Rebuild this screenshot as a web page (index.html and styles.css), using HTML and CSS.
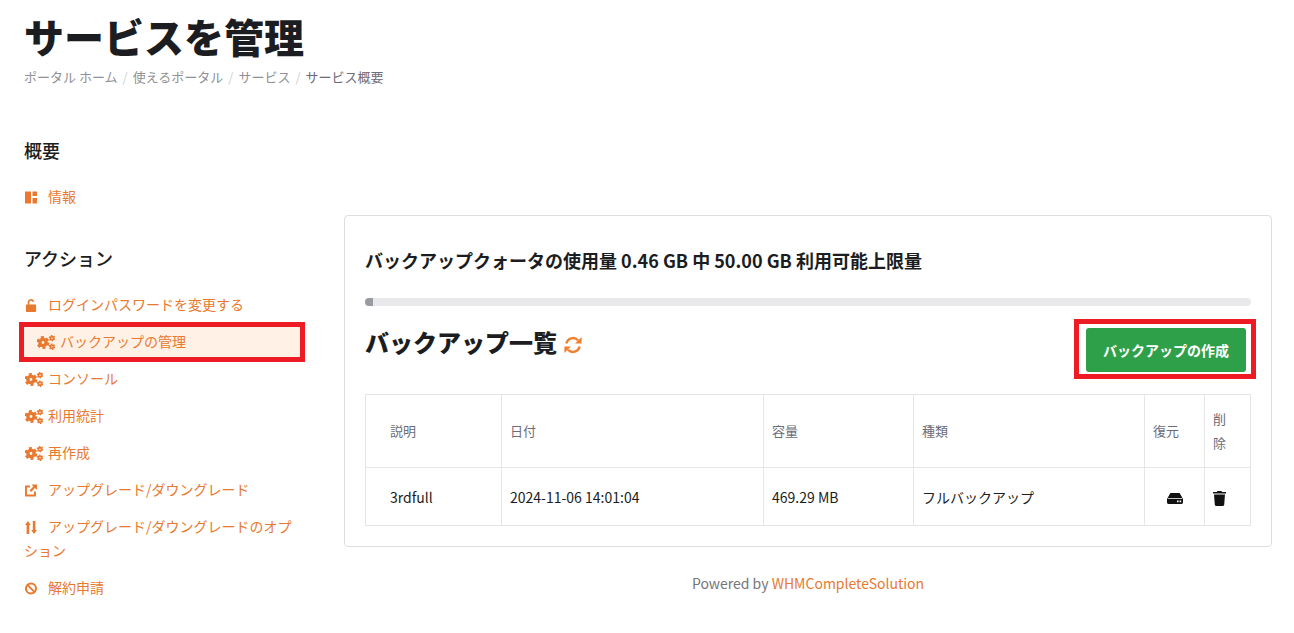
FILE: index.html
```html
<!DOCTYPE html>
<html lang="ja">
<head>
  <meta charset="UTF-8">
  <title>サービスを管理</title>
  <link rel="stylesheet" href="styles.css">
</head>
<body>
  <svg class="defs" width="0" height="0">
    <symbol id="i-cogs" viewBox="0 0 18 15">
      <circle cx="6" cy="7.5" r="3.1" fill="none" stroke="currentColor" stroke-width="3.4"/>
      <circle cx="6" cy="7.5" r="5.2" fill="none" stroke="currentColor" stroke-width="2.4" stroke-dasharray="3 2.44"/>
      <circle cx="15" cy="3.2" r="1.6" fill="none" stroke="currentColor" stroke-width="1.7"/>
      <circle cx="15" cy="3.2" r="2.7" fill="none" stroke="currentColor" stroke-width="1.2" stroke-dasharray="1.5 1.33"/>
      <circle cx="15" cy="11.8" r="1.6" fill="none" stroke="currentColor" stroke-width="1.7"/>
      <circle cx="15" cy="11.8" r="2.7" fill="none" stroke="currentColor" stroke-width="1.2" stroke-dasharray="1.5 1.33"/>
    </symbol>
  </svg>

  <header class="page-head">
    <h1>サービスを管理</h1>
    <nav class="crumbs">
      <a>ポータル ホーム</a><i>/</i><a>使えるポータル</a><i>/</i><a>サービス</a><i>/</i><span>サービス概要</span>
    </nav>
  </header>

  <div class="layout">
    <aside class="sidebar">
      <h3>概要</h3>
      <ul class="menu">
        <li>
          <svg class="ico w12" viewBox="0 0 12 12"><path fill="currentColor" d="M0 0h6v12H0zM7.5 0H12v4.5H7.5zM7.5 6.5H12V12H7.5z"/></svg>情報
        </li>
      </ul>

      <h3 class="second">アクション</h3>
      <ul class="menu second">
        <li>
          <svg class="ico w12" viewBox="0 0 12 14"><path fill="currentColor" d="M1.5 6h9a1 1 0 0 1 1 1v6a1 1 0 0 1-1 1h-9a1 1 0 0 1-1-1V7a1 1 0 0 1 1-1z"/><path fill="none" stroke="currentColor" stroke-width="1.8" d="M3.3 6.5V3.6a2.7 2.7 0 0 1 5.3-.6"/></svg>ログインパスワードを変更する
        </li>
        <li class="active">
          <svg class="ico cog"><use href="#i-cogs"/></svg>バックアップの管理
        </li>
        <li><svg class="ico cog"><use href="#i-cogs"/></svg>コンソール</li>
        <li><svg class="ico cog"><use href="#i-cogs"/></svg>利用統計</li>
        <li><svg class="ico cog"><use href="#i-cogs"/></svg>再作成</li>
        <li>
          <svg class="ico w12" viewBox="0 0 12 12"><path fill="none" stroke="currentColor" stroke-width="1.9" d="M5 2H1v9h9V7"/><path fill="currentColor" d="M6.5 0H12v5.5L10 3.6 6.2 7.4 4.6 5.8 8.4 2z"/></svg>アップグレード/ダウングレード
        </li>
        <li>
          <svg class="ico w12" viewBox="0 0 12 13"><path fill="currentColor" d="M2.9 0l2.9 4H4.2v9H1.6V4H0zM9.1 13L6.2 9h1.6V0h2.6v9H12z"/></svg>アップグレード/ダウングレードのオプション
        </li>
        <li>
          <svg class="ico w12" viewBox="0 0 12 12"><circle cx="6" cy="6" r="5" fill="none" stroke="currentColor" stroke-width="2"/><path stroke="currentColor" stroke-width="2" d="M2.6 2.6l6.8 6.8"/></svg>解約申請
        </li>
      </ul>
    </aside>

    <main class="content">
      <section class="card">
        <p class="quota">バックアップクォータの使用量 0.46 GB 中 50.00 GB 利用可能上限量</p>
        <div class="bar"><div class="bar-fill" style="width: 0.92%"></div></div>

        <div class="list-head">
          <h2>バックアップ一覧
            <svg class="refresh" viewBox="0 0 18 18"><path fill="none" stroke="currentColor" stroke-width="2.4" d="M2.4 7.4A6.8 6.8 0 0 1 14 4.2M15.6 10.6A6.8 6.8 0 0 1 4 13.8"/><path fill="currentColor" d="M17.6 1v6.6H11zM.4 17v-6.6H7z"/></svg>
          </h2>
          <button class="btn-create">バックアップの作成</button>
        </div>

        <table class="backups">
          <colgroup>
            <col class="c-desc"><col class="c-date"><col class="c-size"><col class="c-type"><col class="c-rest"><col class="c-del">
          </colgroup>
          <thead>
            <tr>
              <th class="first">説明</th>
              <th>日付</th>
              <th>容量</th>
              <th>種類</th>
              <th>復元</th>
              <th class="del">削除</th>
            </tr>
          </thead>
          <tbody>
            <tr>
              <td class="first">3rdfull</td>
              <td>2024-11-06 14:01:04</td>
              <td>469.29 MB</td>
              <td>フルバックアップ</td>
              <td class="center">
                <svg class="hdd" viewBox="0 0 16 11"><path fill="currentColor" d="M3.4 0h9.2L16 6v3.6A1.4 1.4 0 0 1 14.6 11H1.4A1.4 1.4 0 0 1 0 9.6V6z"/><path fill="#fff" d="M.8 5h14.4v.7H.8zM10 7.6h1.6v1.6H10zM12.6 7.6h1.6v1.6h-1.6z"/></svg>
              </td>
              <td>
                <svg class="trash" viewBox="0 0 13 15"><path fill="currentColor" d="M4.5 0h4l.6 1H13v1.6H0V1h3.9zM1 3.6h11l-.8 10.2A1.3 1.3 0 0 1 10 15H3a1.3 1.3 0 0 1-1.2-1.2z"/></svg>
              </td>
            </tr>
          </tbody>
        </table>
      </section>
      <footer class="powered">Powered by <a>WHMCompleteSolution</a></footer>
    </main>
  </div>
</body>
</html>
```

FILE: styles.css
```css
html, body {
  margin: 0;
  padding: 0;
  background: #fff;
  color: #1b1d21;
  font-family: "Noto Sans CJK JP", "Noto Sans", sans-serif;
  font-size: 14px;
  overflow: hidden;
}
.defs { position: absolute; }

.page-head { padding: 8px 24px 0; }
.page-head h1 {
  margin: 0;
  font-size: 40px;
  line-height: 56px;
  font-weight: 900;
}
.crumbs {
  margin-top: 3px;
  font-size: 13px;
  line-height: 20px;
  color: #6d6b78;
}
.crumbs a { color: #8f9196; }
.crumbs i {
  font-style: normal;
  color: #d0d1d4;
  padding: 0 5px;
}

.layout {
  display: grid;
  grid-template-columns: 276px 928px;
  column-gap: 44px;
  padding: 50px 0 0 24px;
}

.sidebar h3 {
  margin: 0;
  font-size: 18px;
  line-height: 26px;
  font-weight: 500;
}
.sidebar h3.second { margin-top: 31px; }
.menu {
  list-style: none;
  margin: 14px 0 0;
  padding: 0;
  color: #e8792f;
}
.menu li {
  padding: 6.5px 0;
  line-height: 24px;
  position: relative;
}
.menu li.active {
  background: #fff1e6;
  padding-left: 12px;
}
.menu li.active::after {
  content: "";
  position: absolute;
  left: -5px;
  right: -5px;
  top: 0;
  bottom: -3px;
  border: 5px solid #ed1c24;
}
.ico { vertical-align: -2px; margin-left: 1px; }
.ico.w12 { width: 12px; height: 13px; margin-right: 11px; }
.ico.cog { width: 18px; height: 15px; margin-right: 5px; vertical-align: -3px; }

.content { padding-top: 78px; }
.card {
  height: 332px;
  box-sizing: border-box;
  border: 1px solid #ddd;
  border-radius: 4px;
  padding: 20px;
}
.quota {
  margin: 10px 0 0;
  font-size: 18px;
  line-height: 28px;
  font-weight: 700;
}
.bar {
  margin-top: 24px;
  height: 8px;
  border-radius: 4px;
  background: #e9e9eb;
  overflow: hidden;
}
.bar-fill {
  height: 100%;
  background: #989ba1;
}
.list-head {
  display: flex;
  justify-content: space-between;
  align-items: flex-start;
  margin-top: 22px;
  padding-right: 5px;
}
.list-head h2 {
  margin: -3px 0 0;
  font-size: 24px;
  line-height: 34px;
  font-weight: 900;
}
.refresh {
  width: 18px;
  height: 18px;
  color: #f0802e;
  vertical-align: -2px;
  margin-left: 1px;
}
.btn-create {
  position: relative;
  width: 160px;
  height: 44px;
  border: 0;
  border-radius: 3px;
  background: #2fa04a;
  color: #fff;
  font: 700 14px "Noto Sans CJK JP", "Noto Sans", sans-serif;
}
.btn-create::after {
  content: "";
  position: absolute;
  left: -12px;
  right: -10px;
  top: -9px;
  bottom: -7px;
  border: 5px solid #ed1c24;
}

.backups {
  margin-top: 22px;
  width: 885px;
  table-layout: fixed;
  border-collapse: collapse;
  font-size: 14px;
}
.c-desc { width: 136px; }
.c-date { width: 262px; }
.c-size { width: 150px; }
.c-type { width: 231px; }
.c-rest { width: 60px; }
.c-del { width: 46px; }
.backups th, .backups td {
  border: 1px solid #e6e6e6;
  padding: 8px;
  line-height: 24px;
  text-align: left;
}
.backups th {
  font-size: 13px;
  font-weight: 400;
  color: #6c6b78;
  height: 56px;
}
.backups td { height: 41px; }
.backups .first { padding-left: 24px; }
.backups .del { padding-right: 14px; }
.backups .center { text-align: center; }
.hdd { width: 16px; height: 11px; vertical-align: -1px; color: #111; }
.trash { width: 13px; height: 15px; vertical-align: -3px; color: #111; }

.powered {
  margin-top: 26px;
  text-align: center;
  font-size: 14px;
  line-height: 20px;
  color: #75757a;
}
.powered a { color: #e8792f; }
```
